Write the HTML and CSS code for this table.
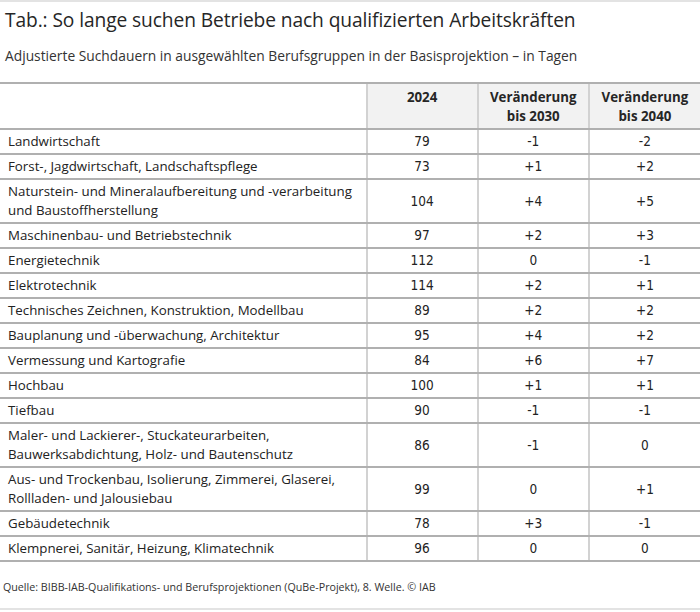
FILE: index.html
```html
<!DOCTYPE html>
<html lang="de">
<head>
<meta charset="utf-8">
<title>Suchdauern</title>
<link rel="stylesheet" href="styles.css">
</head>
<body>
<div class="figure">
  <h1 class="title">Tab.: So lange suchen Betriebe nach qualifizierten Arbeitskräften</h1>
  <p class="subtitle">Adjustierte Suchdauern in ausgewählten Berufsgruppen in der Basisprojektion – in Tagen</p>
  <table class="data">
    <colgroup>
      <col class="c-label">
      <col class="c-num">
      <col class="c-num">
      <col class="c-num">
    </colgroup>
    <thead>
      <tr>
        <th class="h-label"></th>
        <th>2024</th>
        <th>Veränderung<br>bis 2030</th>
        <th>Veränderung<br>bis 2040</th>
      </tr>
    </thead>
    <tbody>
      <tr><td class="label">Landwirtschaft</td><td>79</td><td>-1</td><td>-2</td></tr>
      <tr><td class="label">Forst-, Jagdwirtschaft, Landschaftspflege</td><td>73</td><td>+1</td><td>+2</td></tr>
      <tr><td class="label">Naturstein- und Mineralaufbereitung und -verarbeitung<br>und Baustoffherstellung</td><td>104</td><td>+4</td><td>+5</td></tr>
      <tr><td class="label">Maschinenbau- und Betriebstechnik</td><td>97</td><td>+2</td><td>+3</td></tr>
      <tr><td class="label">Energietechnik</td><td>112</td><td>0</td><td>-1</td></tr>
      <tr><td class="label">Elektrotechnik</td><td>114</td><td>+2</td><td>+1</td></tr>
      <tr><td class="label">Technisches Zeichnen, Konstruktion, Modellbau</td><td>89</td><td>+2</td><td>+2</td></tr>
      <tr><td class="label">Bauplanung und -überwachung, Architektur</td><td>95</td><td>+4</td><td>+2</td></tr>
      <tr><td class="label">Vermessung und Kartografie</td><td>84</td><td>+6</td><td>+7</td></tr>
      <tr><td class="label">Hochbau</td><td>100</td><td>+1</td><td>+1</td></tr>
      <tr><td class="label">Tiefbau</td><td>90</td><td>-1</td><td>-1</td></tr>
      <tr><td class="label">Maler- und Lackierer-, Stuckateurarbeiten,<br>Bauwerksabdichtung, Holz- und Bautenschutz</td><td>86</td><td>-1</td><td>0</td></tr>
      <tr><td class="label">Aus- und Trockenbau, Isolierung, Zimmerei, Glaserei,<br>Rollladen- und Jalousiebau</td><td>99</td><td>0</td><td>+1</td></tr>
      <tr><td class="label">Gebäudetechnik</td><td>78</td><td>+3</td><td>-1</td></tr>
      <tr><td class="label">Klempnerei, Sanitär, Heizung, Klimatechnik</td><td>96</td><td>0</td><td>0</td></tr>
    </tbody>
  </table>
  <p class="source">Quelle: BIBB-IAB-Qualifikations- und Berufsprojektionen (QuBe-Projekt), 8. Welle. © IAB</p>
</div>
</body>
</html>
```
FILE: styles.css
```css
html, body {
  margin: 0;
  padding: 0;
  background: #ffffff;
}

body {
  font-family: "Open Sans", Lato, sans-serif;
  color: #222222;
  width: 700px;
}

.figure {
  border-top: 2px solid #e3e3e3;
  border-bottom: 2px solid #e3e3e3;
  height: 610px;
  box-sizing: border-box;
  display: flex;
  flex-direction: column;
}

.title {
  margin: 6px 0 0 5px;
  font-size: 19.2px;
  line-height: 24px;
  font-weight: 400;
  color: #262626;
  letter-spacing: -0.1px;
}

.subtitle {
  margin: 14px 0 0 5px;
  font-size: 13.8px;
  line-height: 19px;
  color: #333333;
}

.data {
  margin-top: 17px;
  width: 700px;
  border-collapse: collapse;
  table-layout: fixed;
  font-size: 13.3px;
}

.c-label { width: 366px; }
.c-num { width: 111px; }

.data th {
  background: #f2f2f2;
  font-weight: 700;
  text-align: center;
  vertical-align: top;
  line-height: 19px;
  padding: 4px 4px 0 4px;
  height: 40px;
  border-top: 2px solid #b0b0b0;
  border-bottom: 2px solid #b0b0b0;
  border-left: 2px solid #d2d2d2;
  color: #262626;
}

.data th.h-label {
  background: #ffffff;
  border-left: none;
}

.data td {
  padding: 2px 4px;
  line-height: 19px;
  border-bottom: 2px solid #b0b0b0;
  border-left: 2px solid #d2d2d2;
  text-align: center;
  vertical-align: middle;
  font-family: "DejaVu Sans Condensed", "DejaVu Sans", sans-serif;
  font-size: 13.5px;
  color: #222222;
}

.data td.label {
  text-align: left;
  padding-left: 8px;
  border-left: none;
  font-family: "Open Sans", Lato, sans-serif;
  font-size: 13.3px;
}

.source {
  margin: 17px 0 0 3px;
  font-size: 10.7px;
  line-height: 16px;
  color: #333333;
}
```
